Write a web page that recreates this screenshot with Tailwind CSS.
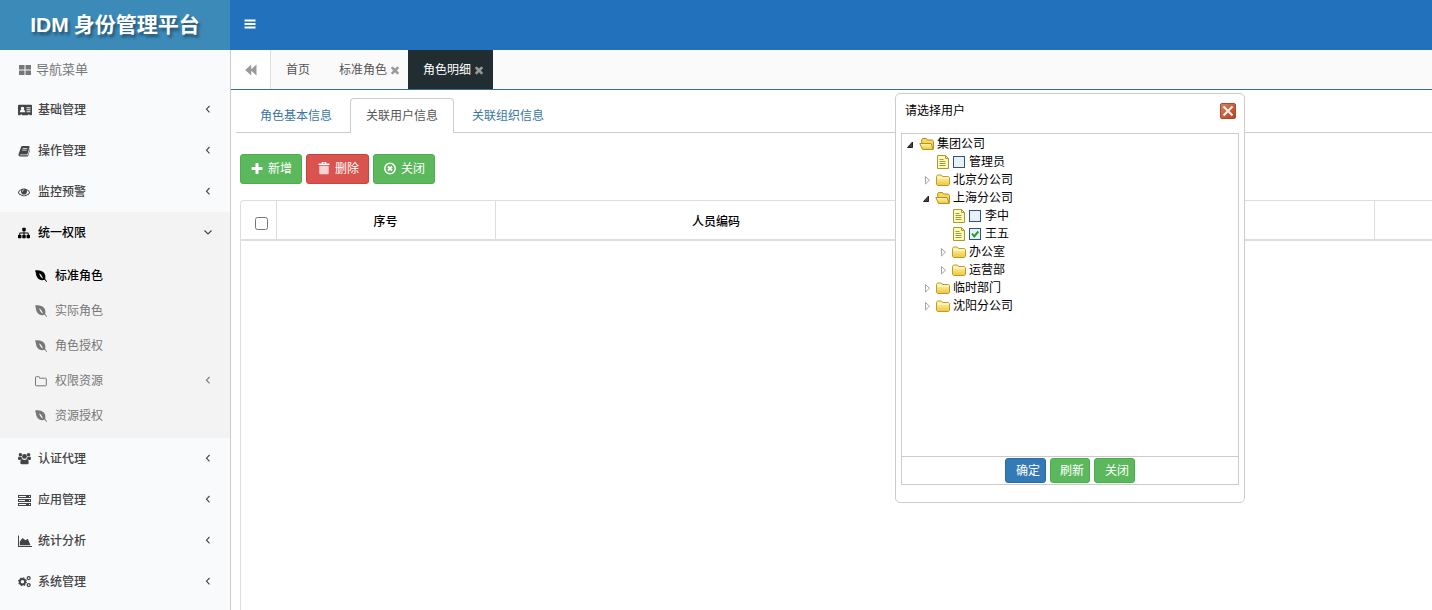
<!DOCTYPE html>
<html lang="zh-CN">
<head>
<meta charset="utf-8">
<meta name="viewport" content="width=device-width, initial-scale=1">
<title>IDM 身份管理平台</title>
<script src="https://cdn.jsdelivr.net/npm/@tailwindcss/browser@4"></script>
</head>
<body class="min-h-screen flex flex-col overflow-x-hidden bg-white text-xs text-[#333] font-['Liberation_Sans','Noto_Sans_CJK_SC',sans-serif]">

<svg class="absolute size-0" aria-hidden="true">
  <linearGradient id="gold" x1="0" y1="0" x2="0" y2="1"><stop offset="0" stop-color="#fffbb0"/><stop offset="1" stop-color="#f0c440"/></linearGradient>
  <linearGradient id="red" x1="0" y1="0" x2="1" y2="1"><stop offset="0" stop-color="#d98368"/><stop offset="1" stop-color="#b83e1c"/></linearGradient>
  <symbol id="left" viewBox="0 0 14 14"><path d="M8.500 3 5.500 6.200 8.500 9.400" fill="none" stroke="currentColor" stroke-width="1.100"/></symbol>
  <symbol id="down" viewBox="0 0 14 14"><path d="M3.500 4.500 7 8 10.500 4.500" fill="none" stroke="currentColor" stroke-width="1.100"/></symbol>
  <symbol id="bars" viewBox="0 0 14 14"><path d="M1.500 1.500h11v2h-11zM1.500 5h11v2h-11zM1.500 8.500h11v2h-11z"/></symbol>
  <symbol id="plus" viewBox="0 0 1792 1792"><path d="M1600 736v192q0 40-28 68t-68 28h-416v416q0 40-28 68t-68 28h-192q-40 0-68-28t-28-68v-416h-416q-40 0-68-28t-28-68v-192q0-40 28-68t68-28h416v-416q0-40 28-68t68-28h192q40 0 68 28t28 68v416h416q40 0 68 28t28 68z"/></symbol>
  <symbol id="times" viewBox="0 0 1792 1792"><path d="M1490 1322q0 40-28 68l-136 136q-28 28-68 28t-68-28l-294-294-294 294q-28 28-68 28t-68-28l-136-136q-28-28-28-68t28-68l294-294-294-294q-28-28-28-68t28-68l136-136q28-28 68-28t68 28l294 294 294-294q28-28 68-28t68 28l136 136q28 28 28 68t-28 68l-294 294 294 294q28 28 28 68z"/></symbol>
  <symbol id="back" viewBox="0 0 14 14"><path d="M7.200 1.500v4.800L12.500 1.500v11L7.200 7.700v4.800L1.200 7z"/></symbol>
  <symbol id="grid" viewBox="0 0 14 14"><path d="M1 2h5.500v4.500H1zM7.500 2H13v4.500H7.500zM1 7.500h5.500V12H1zM7.500 7.500H13V12H7.500z"/></symbol>
  <symbol id="idcard" viewBox="0 0 14 14"><path fill-rule="evenodd" d="M1 1.800h12q1 0 1 1v8.400q0 1-1 1h-1.500v-.7h-1.500v.7h-6v-.7H2.500v.7H1q-1 0-1-1V2.800q0-1 1-1zM4.500 3.800a1.700 1.700 0 0 0-1.200 2.900Q1.800 7 1.800 9.300h5.400Q7.200 7 5.700 6.700a1.700 1.700 0 0 0-1.200-2.900zM8.500 4.200v1h4v-1zM8.500 6.200v1h4v-1zM8.500 8.200v1h4v-1z"/></symbol>
  <symbol id="book" viewBox="0 0 14 14"><path fill-rule="evenodd" d="M5 1.200h7.400q1.300.3 1 1.500l-2.200 7.400q-.3 1-1.300 1H2.700q-.7 0-.7.500.1.500.8.500h8q.6 0 .8-.6l2-6.500q.5.400.3 1l-2 6.400q-.4 1-1.400 1H2.600Q1 13.400.6 12q-.2-.8.2-1.800L3.500 2.700q.4-1.400 1.500-1.500zM5.500 3.500l-.2.800h5.400l.2-.8zM4.900 5.500l-.2.800h5.400l.2-.8z"/></symbol>
  <symbol id="eye" viewBox="0 0 1792 1792"><path d="M1664 960q-152-236-381-353 61 104 61 225 0 185-131.500 316.500t-316.500 131.500-316.500-131.500-131.500-316.500q0-121 61-225-229 117-381 353 133 205 333.500 326.500t434.500 121.500 434.500-121.500 333.500-326.500zm-720-384q0-20-14-34t-34-14q-125 0-214.500 89.500t-89.500 214.500q0 20 14 34t34 14 34-14 14-34q0-86 61-147t147-61q20 0 34-14t14-34zm848 384q0 34-20 69-140 230-376.500 368.500t-499.500 138.500-499.500-139-376.500-368q-20-35-20-69t20-69q140-229 376.500-368t499.500-139 499.500 139 376.500 368q20 35 20 69z"/></symbol>
  <symbol id="sitemap" viewBox="0 0 1792 1792"><path d="M1792 1248v320q0 40-28 68t-68 28h-320q-40 0-68-28t-28-68v-320q0-40 28-68t68-28h96v-192h-512v192h96q40 0 68 28t28 68v320q0 40-28 68t-68 28h-320q-40 0-68-28t-28-68v-320q0-40 28-68t68-28h96v-192h-512v192h96q40 0 68 28t28 68v320q0 40-28 68t-68 28h-320q-40 0-68-28t-28-68v-320q0-40 28-68t68-28h96v-192q0-52 38-90t90-38h512v-192h-96q-40 0-68-28t-28-68v-320q0-40 28-68t68-28h320q40 0 68 28t28 68v320q0 40-28 68t-68 28h-96v192h512q52 0 90 38t38 90v192h96q40 0 68 28t28 68z"/></symbol>
  <symbol id="leaf" viewBox="0 0 14 14"><path fill-rule="evenodd" d="M1 1.500c4-.6 7.200.2 9 2.300 1.500 2 1.600 4.200 1.200 6.300l1.900 2.400-.6.500-1.900-2.200c-3 .9-5.600.2-7.400-2.200C1.700 6.300 2.200 4 1 1.500zM5.200 4.300C5.600 6.600 7 8.600 9 9.800 8.600 7.700 7.200 5.600 5.200 4.300z"/></symbol>
  <symbol id="folder" viewBox="0 0 14 14"><path d="M1.500 11V3.500q0-.8.800-.8h2.400q.8 0 .8.800v.7h6q.8 0 .8.800v6q0 .8-.8.800H2.300q-.8 0-.8-.8z" fill="none" stroke="currentColor"/></symbol>
  <symbol id="users" viewBox="0 0 14 14"><circle cx="2.600" cy="2.900" r="1.900"/><circle cx="11.400" cy="2.900" r="1.900"/><circle cx="7" cy="4.800" r="2.600"/><path d="M0 7.200q0-2.400 1.300-2.400 1.400.9 2.500.3 0 1.500.9 2.500-1.500.1-2.200 1H1.300Q0 8.600 0 7.200zM14 7.200q0-2.400-1.300-2.400-1.400.9-2.500.3 0 1.500-.9 2.500 1.500.1 2.200 1h1.200Q14 8.600 14 7.200zM2.500 11.500Q2.500 8 4.500 7.600 7 9.400 9.500 7.600q2 .4 2 3.900 0 1.800-1.700 1.800H4.200q-1.700 0-1.700-1.800z"/></symbol>
  <symbol id="server" viewBox="0 0 14 14"><path fill-rule="evenodd" d="M0 2h13v3H0zM0 6h13v3H0zM0 10h13v3H0zM1 3v1h7V3zM1 7v1h6V7zM1 11v1h7v-1zM11 3v1h1V3zM11 7v1h1V7zM11 11v1h1v-1z"/></symbol>
  <symbol id="area" viewBox="0 0 14 14"><path d="M0 1.500h1V12h13v1H0zM1.800 11.200V7.500L4.500 4l3 2.200L9.800 4.800l2.700 6.400z"/></symbol>
  <symbol id="cogs" viewBox="0 0 14 14"><circle cx="4.800" cy="7.200" r="2.900" fill="none" stroke="currentColor" stroke-width="2"/><circle cx="4.800" cy="7.200" r="4.200" fill="none" stroke="currentColor" stroke-width="1.200" stroke-dasharray="1.650 1.650"/><circle cx="11.500" cy="3.300" r="1.600" fill="none" stroke="currentColor" stroke-width="1.400"/><circle cx="11.500" cy="10.900" r="1.600" fill="none" stroke="currentColor" stroke-width="1.400"/></symbol>
  <symbol id="trash" viewBox="0 0 14 14"><path d="M1.500 1.500h3.200V0h4.600v1.500h3.200V3h-11zM5.700.8v.7h2.600V.8z" fill-rule="evenodd"/><path d="M2.300 3.700h9.400v7.600q0 .9-.9.900H3.200q-.9 0-.9-.9z" opacity=".75"/></symbol>
  <symbol id="closeo" viewBox="0 0 14 14"><circle cx="7" cy="6.500" r="5.200" fill="none" stroke="currentColor" stroke-width="1.500"/><path d="m5 4.500 4 4M9 4.500l-4 4" stroke="currentColor" stroke-width="1.900"/></symbol>
  <symbol id="tOpen" viewBox="0 0 16 16"><path d="M9.500 6v5.500H4.500z" fill="#444" stroke="#222" stroke-linejoin="round"/></symbol>
  <symbol id="tShut" viewBox="0 0 16 16"><path d="M6.500 4.500v7.500l4-3.750z" fill="#fff" stroke="#a5a5a5"/></symbol>
  <symbol id="fShut" viewBox="0 0 16 16"><path d="M1.500 12.500v-8l1-1.500h4l1 1.500h6l1 1v7l-1 1h-11z" fill="url(#gold)" stroke="#c09a2c"/><path d="M2.500 6h11" stroke="#fffde0"/></symbol>
  <symbol id="fOpen" viewBox="0 0 16 16"><path d="M3.500 12.500 2.500 4l1-1.500h4l1 1.500h5l1 1.500v7l-1 1h-9z" fill="#f5d85c" stroke="#b88f22"/><path d="M.8 7.500h11.400l2 6H3.500z" fill="url(#gold)" stroke="#b88f22"/></symbol>
  <symbol id="doc" viewBox="0 0 16 16"><path d="M2.500 1.500h8l3 3v10h-11z" fill="#fdfab4" stroke="#a39a3c"/><path d="M10.500 1.500v3h3" fill="none" stroke="#a39a3c"/><path d="M4.500 5.500h4M4.500 7.500h6M4.500 9.500h6M4.500 11.500h6" stroke="#9d9a4c"/></symbol>
</svg>

<header class="flex h-[50px] bg-[#2271bd] text-white">
  <a href="#" class="w-[230px] shrink-0 flex items-center justify-center gap-[5px] bg-[#3c8ab8] text-[21px] font-bold [text-shadow:2px_3px_3px_rgba(0,0,0,0.4)]"><span>IDM</span><span>身份管理平台</span></a>
  <button type="button" aria-label="切换菜单" class="w-10 flex items-center justify-center"><svg class="size-3.5 fill-current"><use href="#bars"/></svg></button>
</header>

<div class="flex flex-1">
  <nav class="w-[231px] shrink-0 border-r border-[#ccc] bg-[#f9fafc] text-[#444]">
    <h2 class="h-[39px] flex items-center gap-1 pl-[18px] text-[13px] text-[#777]"><svg class="size-3.5 fill-current"><use href="#grid"/></svg>导航菜单</h2>
    <ul class="font-medium">
      <li><a href="#" class="h-[41px] flex items-center gap-1.5 pl-[18px] pr-[15px]"><svg class="size-3.5 fill-current"><use href="#idcard"/></svg><span class="flex-1">基础管理</span><svg class="size-3.5"><use href="#left"/></svg></a></li>
      <li><a href="#" class="h-[41px] flex items-center gap-2 pl-[18px] pr-[15px]"><svg class="size-3 fill-current"><use href="#book"/></svg><span class="flex-1">操作管理</span><svg class="size-3.5"><use href="#left"/></svg></a></li>
      <li><a href="#" class="h-[41px] flex items-center gap-2 pl-[18px] pr-[15px]"><svg class="size-3 fill-current"><use href="#eye"/></svg><span class="flex-1">监控预警</span><svg class="size-3.5"><use href="#left"/></svg></a></li>
      <li class="bg-[#f3f3f3]">
        <a href="#" class="h-[41px] flex items-center gap-2 pl-[18px] pr-[15px] text-black"><svg class="size-3 fill-current"><use href="#sitemap"/></svg><span class="flex-1">统一权限</span><svg class="size-3.5 text-[#444]"><use href="#down"/></svg></a>
        <ul class="py-[5px] font-normal text-[#777]">
          <li><a href="#" class="h-[35px] flex items-center gap-[7px] pl-[34px] pr-[15px] font-medium text-black"><svg class="size-3.5 fill-current"><use href="#leaf"/></svg>标准角色</a></li>
          <li><a href="#" class="h-[35px] flex items-center gap-[7px] pl-[34px] pr-[15px]"><svg class="size-3.5 fill-current"><use href="#leaf"/></svg>实际角色</a></li>
          <li><a href="#" class="h-[35px] flex items-center gap-[7px] pl-[34px] pr-[15px]"><svg class="size-3.5 fill-current"><use href="#leaf"/></svg>角色授权</a></li>
          <li><a href="#" class="h-[35px] flex items-center gap-[7px] pl-[34px] pr-[15px]"><svg class="size-3.5 fill-current"><use href="#folder"/></svg><span class="flex-1">权限资源</span><svg class="size-3.5"><use href="#left"/></svg></a></li>
          <li><a href="#" class="h-[35px] flex items-center gap-[7px] pl-[34px] pr-[15px]"><svg class="size-3.5 fill-current"><use href="#leaf"/></svg>资源授权</a></li>
        </ul>
      </li>
      <li><a href="#" class="h-[41px] flex items-center gap-[7px] pl-[18px] pr-[15px]"><svg class="size-[13px] fill-current"><use href="#users"/></svg><span class="flex-1">认证代理</span><svg class="size-3.5"><use href="#left"/></svg></a></li>
      <li><a href="#" class="h-[41px] flex items-center gap-1.5 pl-[18px] pr-[15px]"><svg class="size-3.5 fill-current"><use href="#server"/></svg><span class="flex-1">应用管理</span><svg class="size-3.5"><use href="#left"/></svg></a></li>
      <li><a href="#" class="h-[41px] flex items-center gap-1.5 pl-[18px] pr-[15px]"><svg class="size-3.5 fill-current"><use href="#area"/></svg><span class="flex-1">统计分析</span><svg class="size-3.5"><use href="#left"/></svg></a></li>
      <li><a href="#" class="h-[41px] flex items-center gap-[7px] pl-[18px] pr-[15px]"><svg class="size-[13px] fill-current"><use href="#cogs"/></svg><span class="flex-1">系统管理</span><svg class="size-3.5"><use href="#left"/></svg></a></li>
    </ul>
  </nav>

  <main class="relative flex-1 min-w-0 flex flex-col">
    <div class="h-10 flex border-b border-[#2f6f94] bg-[#fafafa] text-[#555]">
      <button type="button" aria-label="向左滚动" class="w-10 flex items-center justify-center border-r border-[#ddd] bg-white text-[#999]"><svg class="size-3.5 fill-current"><use href="#back"/></svg></button>
      <a href="#" class="flex items-center px-[15px]">首页</a>
      <div class="flex items-center pl-3.5 pr-[7px] gap-0.5"><a href="#">标准角色</a><button type="button" aria-label="关闭标准角色"><svg class="size-3 fill-[#999]"><use href="#times"/></svg></button></div>
      <div class="flex items-center pl-[15px] pr-2 gap-0.5 bg-[#222d32] text-white"><a href="#">角色明细</a><button type="button" aria-label="关闭角色明细"><svg class="size-3 fill-[#999]"><use href="#times"/></svg></button></div>
    </div>

    <div class="flex gap-0.5 mt-2 ml-[5px] pl-2 h-[35px] border-b border-[#ccc] text-[#3a769f]">
      <a href="#" class="flex items-center px-4 h-[35px]">角色基本信息</a>
      <a href="#" class="flex items-center px-[15px] h-[35px] rounded-t border border-b-0 border-[#ccc] bg-white text-[#555]">关联用户信息</a>
      <a href="#" class="flex items-center px-4 h-[35px]">关联组织信息</a>
    </div>

    <div class="flex gap-1 mt-[21px] ml-[9px] text-white">
      <button type="button" class="h-[30px] px-[9px] flex items-center gap-1 rounded-[3px] border border-[#4cae4c] bg-[#5cb85c]"><svg class="size-3.5 fill-current"><use href="#plus"/></svg>新增</button>
      <button type="button" class="h-[30px] pl-2.5 pr-[9px] flex items-center gap-1 rounded-[3px] border border-[#d43f3a] bg-[#d9534f]"><svg class="size-3.5 fill-current"><use href="#trash"/></svg>删除</button>
      <button type="button" class="h-[30px] px-[9px] flex items-center gap-1 rounded-[3px] border border-[#4cae4c] bg-[#5cb85c]"><svg class="size-3.5 fill-current"><use href="#closeo"/></svg>关闭</button>
    </div>

    <div class="flex-1 mt-4 ml-[9px] rounded-tl border-l border-t border-[#ddd]">
      <table class="w-full table-fixed">
        <thead>
          <tr class="h-[39px] border-b-2 border-[#ddd] text-black">
            <th class="w-[35px] border-r border-[#ddd]"><input type="checkbox" aria-label="全选" class="ml-1.5 mt-1.5 size-[13px] align-middle"></th>
            <th class="w-[18.4%] border-r border-[#ddd] pt-1 font-medium">序号</th>
            <th class="w-[37.1%] border-r border-[#ddd] pt-1 font-medium">人员编码</th>
            <th class="w-[36.7%] border-r border-[#ddd]"></th>
            <th></th>
          </tr>
        </thead>
      </table>
    </div>

    <section role="dialog" aria-labelledby="dlg" class="absolute top-[43px] right-[187px] w-[350px] h-[410px] flex flex-col rounded-[5px] border border-[#ccc] bg-white px-[5px] text-black">
      <div class="h-[39px] flex items-center justify-between pl-1 pr-[3px] pb-1.5">
        <h3 id="dlg">请选择用户</h3>
        <button type="button" aria-label="关闭窗口"><svg class="size-4" viewBox="0 0 16 16"><rect x=".5" y=".5" width="15" height="15" rx="1.500" fill="url(#red)" stroke="#b04a2c"/><path d="m3.500 3.500 9 9M12.500 3.500l-9 9" stroke="#fff4e8" stroke-width="2"/></svg></button>
      </div>
      <ul role="tree" class="h-[324px] border border-[#ccc] pl-px pt-px leading-[18px]">
        <li class="flex items-center h-[18px]"><svg class="size-4"><use href="#tOpen"/></svg><svg class="size-4 mr-0.5"><use href="#fOpen"/></svg>集团公司</li>
        <li class="flex items-center h-[18px] pl-8"><svg class="size-4 mr-0.5"><use href="#doc"/></svg><label class="flex items-center"><input type="checkbox" class="appearance-none size-3 mr-1 border border-[#2f5474] bg-[#e9f1f8]">管理员</label></li>
        <li class="flex items-center h-[18px] pl-4"><svg class="size-4"><use href="#tShut"/></svg><svg class="size-4 mr-0.5"><use href="#fShut"/></svg>北京分公司</li>
        <li class="flex items-center h-[18px] pl-4"><svg class="size-4"><use href="#tOpen"/></svg><svg class="size-4 mr-0.5"><use href="#fOpen"/></svg>上海分公司</li>
        <li class="flex items-center h-[18px] pl-12"><svg class="size-4 mr-0.5"><use href="#doc"/></svg><label class="flex items-center"><input type="checkbox" class="appearance-none size-3 mr-1 border border-[#2f5474] bg-[#e9f1f8]">李中</label></li>
        <li class="flex items-center h-[18px] pl-12"><svg class="size-4 mr-0.5"><use href="#doc"/></svg><label class="flex items-center"><span class="grid mr-1"><input type="checkbox" checked class="col-start-1 row-start-1 appearance-none size-3 border border-[#2f5474] bg-[#e9f1f8]"><svg class="col-start-1 row-start-1 size-3" viewBox="0 0 12 12"><path d="m3 5.500 2.200 2.800L9.300 3.500" fill="none" stroke="#22a022" stroke-width="2"/></svg></span>王五</label></li>
        <li class="flex items-center h-[18px] pl-8"><svg class="size-4"><use href="#tShut"/></svg><svg class="size-4 mr-0.5"><use href="#fShut"/></svg>办公室</li>
        <li class="flex items-center h-[18px] pl-8"><svg class="size-4"><use href="#tShut"/></svg><svg class="size-4 mr-0.5"><use href="#fShut"/></svg>运营部</li>
        <li class="flex items-center h-[18px] pl-4"><svg class="size-4"><use href="#tShut"/></svg><svg class="size-4 mr-0.5"><use href="#fShut"/></svg>临时部门</li>
        <li class="flex items-center h-[18px] pl-4"><svg class="size-4"><use href="#tShut"/></svg><svg class="size-4 mr-0.5"><use href="#fShut"/></svg>沈阳分公司</li>
      </ul>
      <div class="h-7 flex items-start justify-center gap-1 border border-t-0 border-[#ccc] pt-px text-white">
        <button type="button" class="h-[25px] pl-2.5 pr-[5px] rounded-[3px] border border-[#2e6da4] bg-[#337ab7]">确定</button>
        <button type="button" class="h-[25px] pl-[9px] pr-[5px] rounded-[3px] border border-[#4cae4c] bg-[#5cb85c]">刷新</button>
        <button type="button" class="h-[25px] pl-2.5 pr-[5px] rounded-[3px] border border-[#4cae4c] bg-[#5cb85c]">关闭</button>
      </div>
    </section>
  </main>
</div>
</body>
</html>
